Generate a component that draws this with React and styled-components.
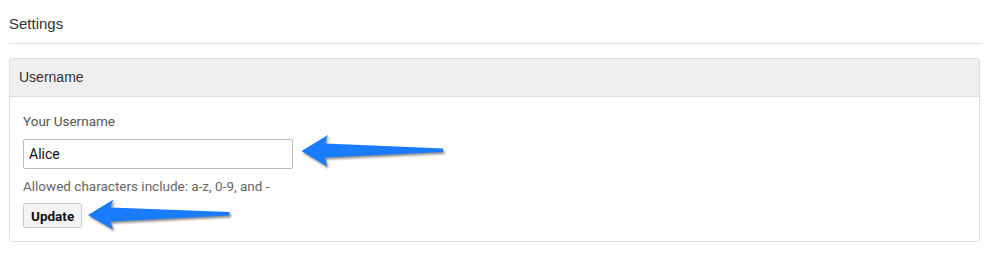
import styled, { createGlobalStyle } from 'styled-components';

const GlobalStyle = createGlobalStyle`
  body {
    margin: 0;
    background: #fff;
    font-family: Roboto, "Liberation Sans", Arial, sans-serif;
    color: #333;
  }
`;

const Page = styled.div`
  position: relative;
  width: 995px;
  height: 258px;
  padding: 14px 14px 0 9px;
  box-sizing: border-box;
`;

const Title = styled.h1`
  margin: 0;
  font-family: "Liberation Sans", Arial, sans-serif;
  font-size: 15px;
  font-weight: 400;
  line-height: 20px;
  color: #333;
  padding-bottom: 9px;
  border-bottom: 1px solid #ddd;
`;

const Panel = styled.section`
  margin-top: 14px;
  border: 1px solid #ddd;
  border-radius: 3px;
  width: 971px;
  box-sizing: border-box;
`;

const PanelHeader = styled.div`
  background: #efefef;
  border-bottom: 1px solid #ddd;
  padding: 9px 9px;
  font-family: "Liberation Sans", Arial, sans-serif;
  font-size: 14px;
  line-height: 19px;
  color: #333;
`;

const PanelBody = styled.div`
  padding: 15px 13px 13px;
  display: flex;
  flex-direction: column;
  align-items: flex-start;
`;

const Label = styled.label`
  font-size: 13.5px;
  line-height: 18px;
  color: #555;
  margin-bottom: 9px;
`;

const Input = styled.input`
  width: 270px;
  height: 30px;
  box-sizing: border-box;
  border: 1px solid #bbb;
  border-radius: 2px;
  padding: 0 5px;
  font-family: Roboto, Arial, sans-serif;
  font-size: 14px;
  color: #111;
  outline: none;
`;

const Help = styled.p`
  margin: 8px 0 0;
  font-size: 13.5px;
  line-height: 18px;
  color: #666;
`;

const Button = styled.button`
  margin-top: 8px;
  height: 25px;
  padding: 0 7px;
  background: #f3f3f3;
  border: 1px solid #c8c8c8;
  border-radius: 3px;
  font-family: Roboto, Arial, sans-serif;
  font-size: 13.5px;
  font-weight: 700;
  color: #111;
  cursor: pointer;
`;

const Overlay = styled.svg`
  position: absolute;
  left: 0;
  top: 0;
  pointer-events: none;
`;

function Arrow({ tip, headTop, headBottom, shaftTop, shaftBottom, tailTop, tailBottom }) {
  const d = `M${tip} L${headTop} Q${shaftTop[0] + 1},${(headTop[1] + shaftTop[1]) / 2} ${shaftTop} L${tailTop} L${tailBottom} L${shaftBottom} Q${shaftBottom[0] + 1},${(headBottom[1] + shaftBottom[1]) / 2} ${headBottom} Z`;
  return (
    <g>
      <path d={d} fill="#333" opacity="0.55" transform="translate(1.5 2)" filter="url(#blur)" />
      <path d={d} fill="#1a7bfb" />
    </g>
  );
}

export default function App() {
  return (
    <Page>
      <GlobalStyle />
      <Title>Settings</Title>
      <Panel>
        <PanelHeader>Username</PanelHeader>
        <PanelBody>
          <Label htmlFor="username">Your Username</Label>
          <Input id="username" defaultValue="Alice" />
          <Help>Allowed characters include: a-z, 0-9, and -</Help>
          <Button>Update</Button>
        </PanelBody>
      </Panel>
      <Overlay width="995" height="258">
        <defs>
          <filter id="blur" x="-10%" y="-50%" width="120%" height="200%">
            <feGaussianBlur stdDeviation="1.2" />
          </filter>
        </defs>
        <Arrow
          tip={[301.5, 151]}
          headTop={[328, 135]}
          headBottom={[327, 166.5]}
          shaftTop={[325, 143.5]}
          shaftBottom={[325, 157.5]}
          tailTop={[443, 148.5]}
          tailBottom={[443, 152]}
        />
        <Arrow
          tip={[88, 215]}
          headTop={[113.5, 199.5]}
          headBottom={[113, 229.5]}
          shaftTop={[110.5, 207.5]}
          shaftBottom={[110.5, 221.5]}
          tailTop={[229.5, 212]}
          tailBottom={[229.5, 215.5]}
        />
      </Overlay>
    </Page>
  );
}
